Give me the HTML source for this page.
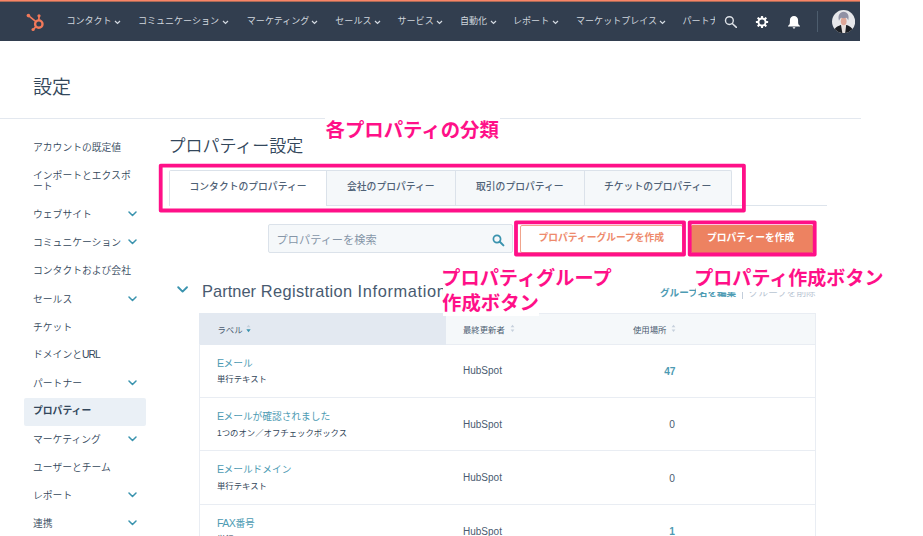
<!DOCTYPE html>
<html lang="ja">
<head>
<meta charset="utf-8">
<title>設定</title>
<style>
*{box-sizing:border-box;margin:0;padding:0}
html,body{width:923px;height:536px;overflow:hidden;background:#fff}
body{position:relative;font-family:"Liberation Sans","Noto Sans CJK JP",sans-serif;color:#33475b;-webkit-font-smoothing:antialiased}
.abs{position:absolute;white-space:nowrap}
/* nav */
#nav{position:absolute;left:0;top:0;width:860.4px;height:41px;background:#323e4f;border-top:2px solid #f98466}
.nv{position:absolute;top:0;height:39px;line-height:39px;font-size:9.05px;color:#d0d6de;white-space:nowrap;font-weight:400}
.nc{top:17.6px;margin-left:-0.8px}
/* sidebar */
.sb{position:absolute;left:33px;font-size:9.8px;line-height:11.5px;color:#33475b;white-space:nowrap;font-weight:350}
.chev{position:absolute;left:127.8px;width:9px;height:6px}
/* text */
.t{position:absolute;white-space:nowrap;line-height:1}
.pink{color:#ff1088;font-weight:700;font-size:19.4px;line-height:25px;font-family:"Liberation Sans","Noto Sans CJK JP",sans-serif}

.tab{top:181px;font-size:9.8px;line-height:12px;color:#4f6176;font-weight:500}
.rl{left:199px;width:616.5px;height:1px;background:#e9edf3}
.th{top:324.6px;font-size:8.4px;line-height:10px;color:#4a5b70}
.lk{left:217px;font-size:9.7px;line-height:12px;color:#4d9bb3}
.sub{left:217px;font-size:8.4px;line-height:10px;color:#33475b}
.hs{left:463px;font-size:10px;line-height:12px;color:#4a5b70}
.num{left:635px;width:40px;text-align:right;font-size:10.2px;line-height:12px;margin-top:1px;color:#4a5b70}
.la{font-size:10.6px;letter-spacing:-0.55px}
</style>
</head>
<body>

<!-- top navigation -->
<div id="nav">
  <div class="abs" style="left:0;top:-1px;width:100%;height:1px;background:#a96a57"></div>
  <svg class="abs" style="left:26px;top:10px" width="20" height="21" viewBox="0 0 20 21">
    <g fill="none" stroke="#f2795a" stroke-width="1.7" stroke-linecap="round">
      <circle cx="12.8" cy="12.1" r="3.7" stroke-width="2.4"/>
      <line x1="2.5" y1="3.7" x2="9.6" y2="9.4"/>
      <line x1="13" y1="3.8" x2="12.9" y2="7.6"/>
      <line x1="7.3" y1="17.3" x2="9.8" y2="14.9"/>
    </g>
    <circle cx="2.4" cy="3.6" r="1.8" fill="#f2795a"/>
    <circle cx="13" cy="3.8" r="1.6" fill="#f2795a"/>
    <circle cx="7.1" cy="17.5" r="1.6" fill="#f2795a"/>
  </svg>
  <div class="nv" style="left:66.4px">コンタクト</div>
  <div class="nv" style="left:137.9px">コミュニケーション</div>
  <div class="nv" style="left:246.8px">マーケティング</div>
  <div class="nv" style="left:335.3px">セールス</div>
  <div class="nv" style="left:397.5px">サービス</div>
  <div class="nv" style="left:460px">自動化</div>
  <div class="nv" style="left:513px">レポート</div>
  <div class="nv" style="left:576px">マーケットプレイス</div>
  <div class="nv" style="left:682.4px;width:33.1px;overflow:hidden">パートナー</div>

  <!-- nav chevrons -->
  <svg class="abs nc" style="left:115px" width="7" height="5" viewBox="0 0 7 5"><path d="M1 1 L3.5 3.5 L6 1" fill="none" stroke="#d4dae2" stroke-width="1.2"/></svg>
  <svg class="abs nc" style="left:223px" width="7" height="5" viewBox="0 0 7 5"><path d="M1 1 L3.5 3.5 L6 1" fill="none" stroke="#d4dae2" stroke-width="1.2"/></svg>
  <svg class="abs nc" style="left:312px" width="7" height="5" viewBox="0 0 7 5"><path d="M1 1 L3.5 3.5 L6 1" fill="none" stroke="#d4dae2" stroke-width="1.2"/></svg>
  <svg class="abs nc" style="left:375px" width="7" height="5" viewBox="0 0 7 5"><path d="M1 1 L3.5 3.5 L6 1" fill="none" stroke="#d4dae2" stroke-width="1.2"/></svg>
  <svg class="abs nc" style="left:437px" width="7" height="5" viewBox="0 0 7 5"><path d="M1 1 L3.5 3.5 L6 1" fill="none" stroke="#d4dae2" stroke-width="1.2"/></svg>
  <svg class="abs nc" style="left:490.5px" width="7" height="5" viewBox="0 0 7 5"><path d="M1 1 L3.5 3.5 L6 1" fill="none" stroke="#d4dae2" stroke-width="1.2"/></svg>
  <svg class="abs nc" style="left:553px" width="7" height="5" viewBox="0 0 7 5"><path d="M1 1 L3.5 3.5 L6 1" fill="none" stroke="#d4dae2" stroke-width="1.2"/></svg>
  <svg class="abs nc" style="left:659.8px" width="7" height="5" viewBox="0 0 7 5"><path d="M1 1 L3.5 3.5 L6 1" fill="none" stroke="#d4dae2" stroke-width="1.2"/></svg>
  <!-- search icon -->
  <svg class="abs" style="left:723.6px;top:12.8px" width="13.5" height="13.5" viewBox="0 0 13.5 13.5"><circle cx="5.4" cy="5.6" r="3.9" fill="none" stroke="#dde1e7" stroke-width="1.4"/><line x1="8.3" y1="8.5" x2="12.4" y2="12.4" stroke="#dde1e7" stroke-width="1.5" stroke-linecap="round"/></svg>
  <!-- gear icon -->
  <svg class="abs" style="left:755.05px;top:12.9px" width="14" height="14" viewBox="0 0 14 14"><g transform="translate(7 7)"><g fill="#fff"><rect x="-1.05" y="-6.1" width="2.1" height="12.2" rx=".5"/><rect x="-1.05" y="-6.1" width="2.1" height="12.2" rx=".5" transform="rotate(45)"/><rect x="-1.05" y="-6.1" width="2.1" height="12.2" rx=".5" transform="rotate(90)"/><rect x="-1.05" y="-6.1" width="2.1" height="12.2" rx=".5" transform="rotate(135)"/><circle r="4.5"/></g><circle r="2.6" fill="#323e4f"/></g></svg>
  <!-- bell icon -->
  <svg class="abs" style="left:786.7px;top:12.7px" width="14" height="15" viewBox="0 0 14 15"><path d="M1 11.5 L1 10.8 C2.3 10.2 2.9 9.2 2.9 7.6 L2.9 5.4 C2.9 2.8 4.6 1.1 7 1.1 C9.4 1.1 11.1 2.8 11.1 5.4 L11.1 7.6 C11.1 9.2 11.7 10.2 13 10.8 L13 11.5 Z" fill="#fff"/><path d="M5.7 12.3 L8.3 12.3 C8.3 13.1 7.7 13.6 7 13.6 C6.3 13.6 5.7 13.1 5.7 12.3 Z" fill="#fff"/></svg>
  <div class="abs" style="left:817px;top:9px;width:1px;height:21px;background:#4d5d6e"></div>
  <!-- avatar -->
  <svg class="abs" style="left:831.7px;top:8px" width="23.2" height="23.2" viewBox="0 0 23.2 23.2">
    <defs><clipPath id="av"><circle cx="11.6" cy="11.6" r="11.6"/></clipPath></defs>
    <circle cx="11.6" cy="11.6" r="11.6" fill="#e6e7ea"/>
    <g clip-path="url(#av)">
      <path d="M1 23.2 C1.5 18.5 4.5 16.8 8.6 15 L14.6 15 C18.5 16.6 21.5 18.5 22.2 23.2 Z" fill="#1c1f24"/>
      <path d="M9 15 L14.2 15 L13.2 23.2 L10.4 23.2 Z" fill="#e6e0dd"/>
      <ellipse cx="11.7" cy="11.3" rx="2.9" ry="4" fill="#e0a898"/>
      <path d="M7 10.8 C5.4 5.5 8 1.8 11.6 1.8 C15.6 1.8 17.6 5.6 16.2 10.6 C15.8 9 15.2 8.2 14.4 7.8 C12.6 8.4 10.4 8.2 9 7.8 C8.2 8.4 7.6 9.4 7 10.8 Z" fill="#9091a4"/>
    </g>
  </svg>
</div>

<!-- page title -->
<div class="t" style="left:33px;top:77.5px;font-size:19px;line-height:20px;font-weight:350">設定</div>
<div class="abs" style="left:0;top:118px;width:860.5px;height:1px;background:#e3e8ef"></div>

<!-- sidebar -->
<div class="sb" style="top:141.5px">アカウントの既定値</div>
<div class="sb" style="top:169.5px">インポートとエクスポ</div>
<div class="sb" style="top:181.2px">ート</div>
<div class="sb" style="top:209px">ウェブサイト</div>
<div class="sb" style="top:237px">コミュニケーション</div>
<div class="sb" style="top:265px">コンタクトおよび会社</div>
<div class="sb" style="top:293.5px">セールス</div>
<div class="sb" style="top:321.5px">チケット</div>
<div class="sb" style="top:349px">ドメインと<span style="font-size:10.3px;letter-spacing:-0.9px">URL</span></div>
<div class="sb" style="top:377.5px">パートナー</div>
<div class="abs" style="left:24px;top:397.5px;width:122px;height:28px;background:#eaf0f6;border-radius:2px"></div>
<div class="sb" style="top:405px;font-weight:700">プロパティー</div>
<div class="sb" style="top:433.5px">マーケティング</div>
<div class="sb" style="top:462px">ユーザーとチーム</div>
<div class="sb" style="top:490px">レポート</div>
<div class="sb" style="top:518px">連携</div>

<!-- sidebar chevrons -->
<svg class="chev" style="top:210.8px" viewBox="0 0 9 6"><path d="M1 1 L4.5 4.5 L8 1" fill="none" stroke="#3a93ae" stroke-width="1.5" stroke-linecap="round" stroke-linejoin="round"/></svg>
<svg class="chev" style="top:238.8px" viewBox="0 0 9 6"><path d="M1 1 L4.5 4.5 L8 1" fill="none" stroke="#3a93ae" stroke-width="1.5" stroke-linecap="round" stroke-linejoin="round"/></svg>
<svg class="chev" style="top:295.7px" viewBox="0 0 9 6"><path d="M1 1 L4.5 4.5 L8 1" fill="none" stroke="#3a93ae" stroke-width="1.5" stroke-linecap="round" stroke-linejoin="round"/></svg>
<svg class="chev" style="top:379.6px" viewBox="0 0 9 6"><path d="M1 1 L4.5 4.5 L8 1" fill="none" stroke="#3a93ae" stroke-width="1.5" stroke-linecap="round" stroke-linejoin="round"/></svg>
<svg class="chev" style="top:435.9px" viewBox="0 0 9 6"><path d="M1 1 L4.5 4.5 L8 1" fill="none" stroke="#3a93ae" stroke-width="1.5" stroke-linecap="round" stroke-linejoin="round"/></svg>
<svg class="chev" style="top:491.6px" viewBox="0 0 9 6"><path d="M1 1 L4.5 4.5 L8 1" fill="none" stroke="#3a93ae" stroke-width="1.5" stroke-linecap="round" stroke-linejoin="round"/></svg>
<svg class="chev" style="top:519.6px" viewBox="0 0 9 6"><path d="M1 1 L4.5 4.5 L8 1" fill="none" stroke="#3a93ae" stroke-width="1.5" stroke-linecap="round" stroke-linejoin="round"/></svg>

<!-- main heading -->
<div class="t" style="left:168.4px;top:138px;font-size:17px;line-height:17px;font-weight:350">プロパティー設定</div>


<!-- tabs -->
<div class="abs" style="left:169px;top:204.5px;width:658px;height:1px;background:#dde4ec"></div>
<div class="abs" style="left:169px;top:170px;width:563px;height:35px;border:1px solid #dbe2ea;border-bottom:none;border-radius:2px 2px 0 0;background:#f5f8fa"></div>
<div class="abs" style="left:170px;top:171px;width:156px;height:36px;background:#fff"></div>
<div class="abs" style="left:326px;top:171px;width:1px;height:35px;background:#dbe2ea"></div>
<div class="abs" style="left:455px;top:171px;width:1px;height:35px;background:#dbe2ea"></div>
<div class="abs" style="left:583.5px;top:171px;width:1px;height:35px;background:#dbe2ea"></div>
<div class="t tab" style="left:189.5px">コンタクトのプロパティー</div>
<div class="t tab" style="left:347px">会社のプロパティー</div>
<div class="t tab" style="left:476px">取引のプロパティー</div>
<div class="t tab" style="left:604px">チケットのプロパティー</div>

<!-- search -->
<div class="abs" style="left:268px;top:224px;width:245px;height:29px;background:#f5f8fa;border:1px solid #dbe2ea;border-radius:2px"></div>
<div class="t" style="left:276.6px;top:233.5px;font-size:11.2px;line-height:13px;color:#8696a8">プロパティーを検索</div>
<svg class="abs" style="left:492px;top:234px" width="13" height="13" viewBox="0 0 13 13"><circle cx="5" cy="5" r="3.6" fill="none" stroke="#3a93ae" stroke-width="1.7"/><line x1="7.8" y1="7.8" x2="11.4" y2="11.4" stroke="#3a93ae" stroke-width="2" stroke-linecap="round"/></svg>

<!-- buttons -->
<div class="abs" style="left:520.3px;top:224.6px;width:163px;height:28.5px;background:#fff;border:1px solid #f0a48c;border-radius:2px"></div>
<div class="t" style="left:538.5px;top:232.5px;font-size:9.75px;line-height:10px;color:#ee8a6c;font-weight:700">プロパティーグループを作成</div>
<div class="abs" style="left:691px;top:225px;width:122px;height:27.5px;background:#ed8261;border-radius:1.5px"></div>
<div class="t" style="left:707px;top:232.5px;font-size:9.75px;line-height:10px;color:#fff;font-weight:700">プロパティーを作成</div>

<!-- section title -->
<svg class="abs" style="left:177.3px;top:285.6px" width="11.2" height="7.5" viewBox="0 0 12 8"><path d="M1.3 1.3 L6 6 L10.7 1.3" fill="none" stroke="#3a93ae" stroke-width="2" stroke-linecap="round" stroke-linejoin="round"/></svg>
<div class="t" style="left:202px;top:281px;font-size:16.4px;line-height:20px;color:#485a70;letter-spacing:0.05px">Partner <span style="letter-spacing:0.365px">Registration </span><span style="letter-spacing:0.64px">Information</span></div>

<!-- group links -->
<div class="t" style="left:660px;top:287px;font-size:9.6px;line-height:11px;color:#4d9bb3;font-weight:700">グループ名を編集</div>
<div class="abs" style="left:742px;top:288px;width:1px;height:11px;background:#c3cedb"></div>
<div class="t" style="left:749px;top:287px;font-size:9.6px;line-height:11px;color:#b9c5d3">グループを削除</div>

<!-- table -->
<div class="abs" style="left:199px;top:312.5px;width:616.5px;height:32.5px;background:#f5f8fa;border-top:1px solid #e9edf3;border-bottom:1px solid #e9edf3"></div>
<div class="abs" style="left:199px;top:312.5px;width:246.5px;height:32.5px;background:#e3e9f1"></div>
<div class="abs" style="left:199px;top:344px;width:1px;height:192px;background:#e9edf3"></div>
<div class="abs" style="left:815px;top:313px;width:1px;height:223px;background:#e9edf3"></div>
<div class="abs rl" style="top:397px"></div>
<div class="abs rl" style="top:450px"></div>
<div class="abs rl" style="top:504px"></div>

<div class="t th" style="left:217.5px">ラベル</div>
<div class="t th" style="left:463px">最終更新者</div>
<div class="t th" style="left:633px">使用場所</div>
<svg class="abs" style="left:246px;top:323.8px" width="5" height="9" viewBox="0 0 5 9"><path d="M.6 3.2 L2.5 .8 L4.4 3.2Z" fill="#c6d0dc"/><path d="M.3 5.3 L2.5 8.3 L4.7 5.3Z" fill="#3a93ae"/></svg>
<svg class="abs" style="left:509.7px;top:323.8px" width="5" height="9" viewBox="0 0 5 9"><path d="M.6 3.2 L2.5 .8 L4.4 3.2Z" fill="#c6d0dc"/><path d="M.6 5.5 L2.5 7.9 L4.4 5.5Z" fill="#c6d0dc"/></svg>
<svg class="abs" style="left:671px;top:323.8px" width="5" height="9" viewBox="0 0 5 9"><path d="M.6 3.2 L2.5 .8 L4.4 3.2Z" fill="#c6d0dc"/><path d="M.6 5.5 L2.5 7.9 L4.4 5.5Z" fill="#c6d0dc"/></svg>

<div class="t lk" style="top:357px"><span class="la">E</span>メール</div>
<div class="t sub" style="top:374px">単行テキスト</div>
<div class="t hs" style="top:365px">HubSpot</div>
<div class="t num" style="top:365px;color:#4d9bb3;font-weight:700;letter-spacing:-0.3px">47</div>

<div class="t lk" style="top:409.6px"><span class="la">E</span>メールが確認されました</div>
<div class="t sub" style="top:427.5px">1つのオン／オフチェックボックス</div>
<div class="t hs" style="top:418.5px">HubSpot</div>
<div class="t num" style="top:418px">0</div>

<div class="t lk" style="top:463px"><span class="la">E</span>メールドメイン</div>
<div class="t sub" style="top:481px">単行テキスト</div>
<div class="t hs" style="top:472px">HubSpot</div>
<div class="t num" style="top:472px">0</div>

<div class="t lk" style="top:516.6px"><span class="la">FAX</span>番号</div>
<div class="t sub" style="top:533.6px">単行テキスト</div>
<div class="t hs" style="top:525.5px">HubSpot</div>
<div class="t num" style="top:525px;color:#4d9bb3;font-weight:700">1</div>

<!-- annotations (pink) -->
<svg class="abs" style="left:0;top:0" width="923" height="536" viewBox="0 0 923 536">
  <g fill="none" stroke="#ff1088" stroke-width="3.8" stroke-linejoin="round">
    <rect x="160.7" y="165.6" width="583.2" height="44.9"/>
    <rect x="516" y="222.3" width="168" height="32.2"/>
    <rect x="689.7" y="222.3" width="125" height="32.2"/>
  </g>
</svg>
<div class="abs" style="left:324.5px;top:116px;width:175px;height:26px;background:#fff"></div>
<div class="t pink" style="left:325.5px;top:118px">各プロパティの分類</div>
<div class="abs" style="left:442.5px;top:266px;width:170px;height:25px;background:#fff"></div>
<div class="abs" style="left:442.5px;top:290px;width:96.5px;height:25.5px;background:#fff"></div>
<div class="t pink" style="left:441.3px;top:265.5px;font-size:19.2px">プロパティグループ</div>
<div class="t pink" style="left:442px;top:290.5px;font-size:19.4px">作成ボタン</div>
<div class="abs" style="left:696px;top:266px;width:188px;height:25.7px;background:#fff"></div>
<div class="t pink" style="left:694.3px;top:265.5px;font-size:19.05px">プロパティ作成ボタン</div>

</body>
</html>
